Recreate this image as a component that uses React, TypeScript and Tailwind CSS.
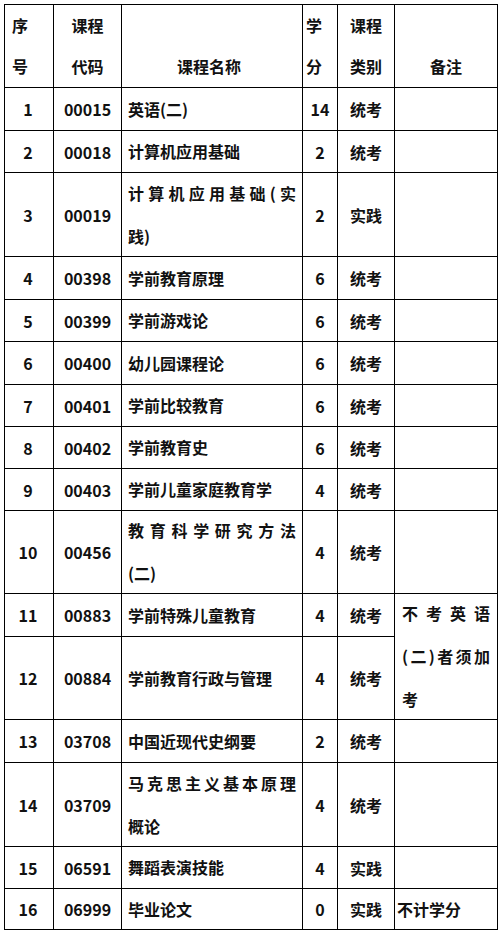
import React from "react"

// one row per course; lines = explicit line breaks for the name cell
interface Course {
  no: string
  code: string
  name: string[]
  credit: string
  kind: string
}

const courses: Course[] = [
  { no: "1", code: "00015", name: ["英语(二)"], credit: "14", kind: "统考" },
  { no: "2", code: "00018", name: ["计算机应用基础"], credit: "2", kind: "统考" },
  { no: "3", code: "00019", name: ["计算机应用基础(实", "践)"], credit: "2", kind: "实践" },
  { no: "4", code: "00398", name: ["学前教育原理"], credit: "6", kind: "统考" },
  { no: "5", code: "00399", name: ["学前游戏论"], credit: "6", kind: "统考" },
  { no: "6", code: "00400", name: ["幼儿园课程论"], credit: "6", kind: "统考" },
  { no: "7", code: "00401", name: ["学前比较教育"], credit: "6", kind: "统考" },
  { no: "8", code: "00402", name: ["学前教育史"], credit: "6", kind: "统考" },
  { no: "9", code: "00403", name: ["学前儿童家庭教育学"], credit: "4", kind: "统考" },
  { no: "10", code: "00456", name: ["教育科学研究方法", "(二)"], credit: "4", kind: "统考" },
  { no: "11", code: "00883", name: ["学前特殊儿童教育"], credit: "4", kind: "统考" },
  { no: "12", code: "00884", name: ["学前教育行政与管理"], credit: "4", kind: "统考" },
  { no: "13", code: "03708", name: ["中国近现代史纲要"], credit: "2", kind: "统考" },
  { no: "14", code: "03709", name: ["马克思主义基本原理", "概论"], credit: "4", kind: "统考" },
  { no: "15", code: "06591", name: ["舞蹈表演技能"], credit: "4", kind: "实践" },
  { no: "16", code: "06999", name: ["毕业论文"], credit: "0", kind: "实践" },
]

const cell = "bg-white flex items-center"

function NameCell({ lines }: { lines: string[] }) {
  return (
    <div className={`${cell} pl-[6px] pr-[6px]`}>
      <div className="w-full leading-[43px]">
        {lines.map((line, i) =>
          lines.length > 1 && i === 0 ? (
            <div key={i} className="text-justify [text-align-last:justify]">
              {line}
            </div>
          ) : (
            <div key={i}>{line}</div>
          )
        )}
      </div>
    </div>
  )
}

export default function App() {
  return (
    <div className="bg-white min-h-[932px] pt-[4px] pl-[4px] font-['Noto_Sans_CJK_SC','Noto_Sans',sans-serif] font-semibold text-[16px] text-[#111]">
      <div className="w-[494px] grid grid-cols-[48px_67px_180px_34px_56px_102px] grid-rows-[82px_42px_41px_83px_42px_41px_42px_41px_41px_41px_82px_42px_82px_42px_83px_41px_40px] gap-px p-px bg-black">
        {/* header */}
        <div className={`${cell} pl-[7px] leading-[41px]`}>
          <div>
            <div>序</div>
            <div>号</div>
          </div>
        </div>
        <div className={`${cell} justify-center leading-[41px]`}>
          <div>
            <div>课程</div>
            <div>代码</div>
          </div>
        </div>
        <div className={`${cell} justify-center leading-[41px]`}>
          <div>
            <div>&nbsp;</div>
            <div className="pr-[6px]">课程名称</div>
          </div>
        </div>
        <div className={`${cell} pl-[3px] leading-[41px]`}>
          <div>
            <div>学</div>
            <div>分</div>
          </div>
        </div>
        <div className={`${cell} justify-center leading-[41px]`}>
          <div>
            <div>课程</div>
            <div>类别</div>
          </div>
        </div>
        <div className={`${cell} justify-center leading-[41px]`}>
          <div>
            <div>&nbsp;</div>
            <div>备注</div>
          </div>
        </div>

        {/* body */}
        {courses.map((c) => (
          <React.Fragment key={c.no}>
            <div className={`${cell} justify-center pr-[2px]`}>{c.no}</div>
            <div className={`${cell} justify-center`}>{c.code}</div>
            <NameCell lines={c.name} />
            <div className={`${cell} justify-center`}>{c.credit}</div>
            <div className={`${cell} justify-center`}>{c.kind}</div>
            {c.no === "11" && (
              <div className={`${cell} row-span-2 pl-[7px] pr-[7px]`}>
                <div className="w-full leading-[43px]">
                  <div className="text-justify [text-align-last:justify]">不考英语</div>
                  <div className="text-justify [text-align-last:justify]">(二)者须加</div>
                  <div>考</div>
                </div>
              </div>
            )}
            {c.no === "16" && <div className={`${cell} pl-[2px]`}>不计学分</div>}
            {c.no !== "11" && c.no !== "12" && c.no !== "16" && <div className={cell}></div>}
          </React.Fragment>
        ))}
      </div>
    </div>
  )
}
